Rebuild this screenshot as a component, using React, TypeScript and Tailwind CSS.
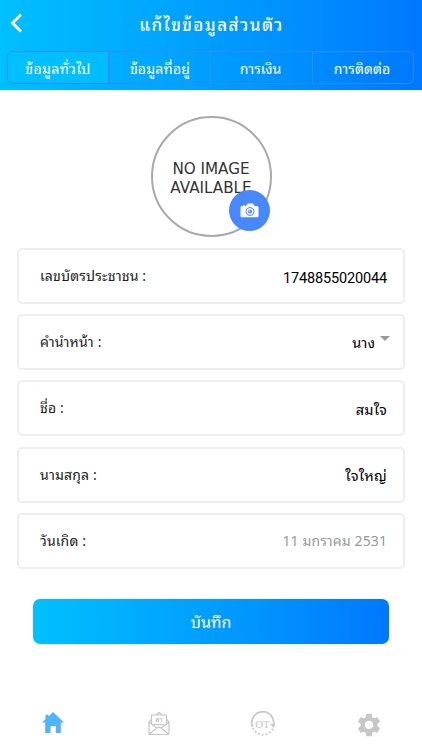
import React from 'react';

const tabs = [
  { label: 'ข้อมูลทั่วไป', style: 'w-[100px] bg-[#00bfff]/90 tracking-[.4px]' },
  { label: 'ข้อมูลที่อยู่', style: 'w-[102px] border-l-2 tracking-[.2px]' },
  { label: 'การเงิน', style: 'w-[102px] border-l pr-[2px]' },
  { label: 'การติดต่อ', style: 'w-[102px] border-l pr-[3px] tracking-[.1px]' },
];

const fields = [
  { label: 'เลขบัตรประชาชน :', value: '1748855020044', style: 'pt-[5px] font-[Roboto] text-[14.500px] tracking-[-.15px] text-black' },
  { label: 'คำนำหน้า :', value: 'นาง', style: 'text-[14.500px] text-black', select: true },
  { label: 'ชื่อ :', value: 'สมใจ', style: 'pt-[1px] text-[14.500px] tracking-[.2px] text-black' },
  { label: 'นามสกุล :', value: 'ใจใหญ่', style: 'pt-[1px] text-[14.500px] tracking-[.3px] text-black' },
  { label: 'วันเกิด :', value: '11 มกราคม 2531', style: 'pb-[3px] text-[14px] tracking-[.1px] text-[#999]' },
];

function Header() {
  return (
    <header className="h-[90px] bg-gradient-to-r from-[#00c0ff] to-[#0078ff] text-white">
      <div className="grid h-[51px] grid-cols-[40px_1fr_40px] items-center">
        <svg className="mt-[-6px] ml-[10px]" width="13" height="20" viewBox="0 0 13 20" fill="none" stroke="white" strokeWidth="3">
          <path d="M11 1.500 2.500 10 11 18.500" />
        </svg>
        <h1 className="pb-[4px] pl-[1px] text-center text-[17px] leading-6 font-medium tracking-[1.450px] whitespace-nowrap">แก้ไขข้อมูลส่วนตัว</h1>
      </div>
      <nav className="ml-[7px] flex h-[33px] w-[407px] overflow-hidden rounded-[6px] border border-[#308dff] text-[14px]">
        {tabs.map((t) => (
          <button key={t.label} className={`flex shrink-0 items-center justify-center border-[#308dff] pb-[1px] whitespace-nowrap ${t.style}`}>
            {t.label}
          </button>
        ))}
      </nav>
    </header>
  );
}

function Avatar() {
  return (
    <div className="relative mt-[26px] ml-[150.500px] h-[121px] w-[121px] rounded-full border-2 border-[#a9a9a9] pt-[42px] text-center font-['DejaVu_Sans'] text-[15.200px] leading-[18.500px] text-[#333]">
      <p className="whitespace-pre-line">{'NO IMAGE\nAVAILABLE'}</p>
      <div className="absolute top-[72px] left-[76px] flex h-[41px] w-[41px] items-center justify-center rounded-full bg-[#4788ff]">
        <svg width="19" height="15" viewBox="0 0 19 15">
          <path fill="white" d="M2 3h1V2h2v1h1L7 1.200Q7.400.5 8 .5h4.500q.7 0 1 .7L14.500 3H17q1.500 0 1.500 1.500V13q0 1.200-1.500 1.200H2Q.5 14.200.5 13V4.500Q.5 3 2 3Z" />
          <circle cx="10" cy="8.500" r="4" fill="none" stroke="#4788ff" strokeWidth="1" />
          <circle cx="10" cy="8.500" r="2" fill="#4788ff" />
          <circle cx="9.600" cy="8.200" r=".6" fill="white" />
        </svg>
      </div>
    </div>
  );
}

function BottomNav() {
  return (
    <nav className="mt-[67px] flex h-[26px] justify-between pr-[39px] pl-[41px]">
      <svg width="24" height="24" viewBox="0 0 24 24" fill="#4fb3ff">
        <path d="M12 1 23 11.500h-3.200V22h-5v-7H9.500v7H4.200V11.500H1L4.500 8.300V3.800h3v1.600Z" />
      </svg>
      <svg className="ml-[3px]" width="24" height="25" viewBox="0 0 24 25" fill="none" stroke="#c7c7c7" strokeWidth="1.200" strokeLinejoin="round">
        <path d="M4.500 13V4h15v9M9 4l3-2.500L15 4" />
        <path d="M4.500 8.500 2 11v11.500q0 1 1 1h18q1 0 1-1V11l-2.500-2.500M2 11l7.800 6q2.200-1.800 4.400 0L22 11M2.500 23l7.300-6M21.500 23l-7.300-6M6.500 13.500h11" />
        <text x="12" y="11" textAnchor="middle" fontSize="7.500" fill="#b5b5b5" stroke="none">ลา</text>
      </svg>
      <svg className="ml-[1px]" width="26" height="26" viewBox="0 0 26 26" fill="none" stroke="#c7c7c7">
        <path d="M2.600 16A11 11 0 1 1 23.500 14" strokeWidth="1.800" />
        <path fill="#c7c7c7" d="M20.800 13.500h4l-1.300 3Z" strokeWidth=".8" />
        <path d="M3 17A11 11 0 0 0 23 17.500" strokeWidth="1.800" strokeDasharray="1.700 2.100" />
        <text x="12.500" y="16.500" textAnchor="middle" fontSize="11" fill="#c7c7c7" stroke="none" className="font-['Liberation_Serif']">OT</text>
      </svg>
      <svg width="28" height="28" viewBox="0 0 24 24" fill="#c7c7c7">
        <path d="M19.140 12.940c.04-.3.060-.61.060-.94 0-.32-.02-.64-.07-.94l2.030-1.580c.18-.14.23-.41.12-.61l-1.920-3.320c-.12-.22-.37-.29-.59-.22l-2.390.96c-.5-.38-1.030-.7-1.620-.94l-.36-2.540c-.04-.24-.24-.41-.48-.41h-3.840c-.24 0-.43.17-.47.41l-.36 2.540c-.59.24-1.130.57-1.620.94l-2.390-.96c-.22-.08-.47 0-.59.22L2.740 8.870c-.12.21-.08.47.12.61l2.030 1.580c-.05.3-.09.63-.09.94s.02.64.07.94l-2.030 1.580c-.18.14-.23.41-.12.61l1.920 3.320c.12.22.37.29.59.22l2.390-.96c.5.38 1.030.7 1.620.94l.36 2.540c.05.24.24.41.48.41h3.840c.24 0 .44-.17.47-.41l.36-2.540c.59-.24 1.130-.56 1.620-.94l2.390.96c.22.08.47 0 .59-.22l1.920-3.320c.12-.22.070-.47-.12-.61l-2.010-1.580zM12 15.600c-1.980 0-3.600-1.620-3.600-3.600s1.620-3.600 3.600-3.600 3.600 1.620 3.600 3.600-1.620 3.600-3.600 3.600z" />
      </svg>
    </nav>
  );
}

export default function App() {
  return (
    <div className="flow-root h-[750px] w-[422px] overflow-hidden bg-white font-['Noto_Sans_Thai_Looped',Loma,Garuda,Waree,Umpush,Sarabun,'Noto_Sans',sans-serif]">
      <Header />
      <Avatar />
      <main className="mt-[11px] ml-[17px] flex w-[388px] flex-col gap-[10.200px]">
        {fields.map((f) => (
          <div key={f.label} className="flex h-[56px] items-center justify-between rounded-[5px] border-2 border-[#eee] pr-4 pl-[21px] whitespace-nowrap">
            <span className="pb-[3px] text-[14px] tracking-[.15px] text-[#222]">{f.label}</span>
            <span className={`flex items-center ${f.style}`}>
              {f.value}
              {f.select && <span className="mr-[-3px] mb-[7px] ml-[5px] border-x-[5px] border-t-[5px] border-x-transparent border-t-[#999]" />}
            </span>
          </div>
        ))}
      </main>
      <button className="mt-[30px] ml-[33px] flex h-[45px] w-[356px] items-center justify-center rounded-[7px] bg-gradient-to-r from-[#00c0ff] to-[#0078ff] text-[16px] tracking-[.1px] text-white">
        บันทึก
      </button>
      <BottomNav />
    </div>
  );
}
